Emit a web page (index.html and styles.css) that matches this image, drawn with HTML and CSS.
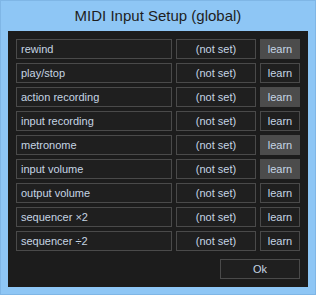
FILE: index.html
```html
<!DOCTYPE html>
<html lang="en">
<head>
    <meta charset="UTF-8">
    <title>MIDI Input Setup (global)</title>
    <link rel="stylesheet" href="styles.css">
</head>
<body>
    <div class="window">
        <div class="title">MIDI Input Setup (global)</div>
        <div class="panel">
            <div class="rows">
                <div class="name">rewind</div>
                <div class="value">(not set)</div>
                <button class="learn on">learn</button>

                <div class="name">play/stop</div>
                <div class="value">(not set)</div>
                <button class="learn">learn</button>

                <div class="name">action recording</div>
                <div class="value">(not set)</div>
                <button class="learn on">learn</button>

                <div class="name">input recording</div>
                <div class="value">(not set)</div>
                <button class="learn">learn</button>

                <div class="name">metronome</div>
                <div class="value">(not set)</div>
                <button class="learn on">learn</button>

                <div class="name">input volume</div>
                <div class="value">(not set)</div>
                <button class="learn on">learn</button>

                <div class="name">output volume</div>
                <div class="value">(not set)</div>
                <button class="learn">learn</button>

                <div class="name">sequencer &times;2</div>
                <div class="value">(not set)</div>
                <button class="learn">learn</button>

                <div class="name">sequencer &divide;2</div>
                <div class="value">(not set)</div>
                <button class="learn">learn</button>
            </div>
            <div class="footer">
                <button class="ok">Ok</button>
            </div>
        </div>
    </div>
</body>
</html>
```

FILE: styles.css
```css
body {
    margin: 0;
    background-color: #8ec6f5;
    font-family: 'Liberation Sans', Arial, sans-serif;
}

.window {
    width: 316px;
    height: 295px;
    box-sizing: border-box;
    border: 1px solid #7fb6e6;
}

.title {
    height: 30px;
    line-height: 30px;
    text-align: center;
    font-size: 15px;
    color: #1e1e1e;
}

.panel {
    margin: 0 7px;
    height: 256px;
    box-sizing: border-box;
    background-color: #1c1c1c;
    padding: 8px;
}

.rows {
    display: grid;
    grid-template-columns: 156px 80px 40px;
    grid-auto-rows: 20px;
    gap: 4px;
}

.name,
.value,
.learn,
.ok {
    box-sizing: border-box;
    border: 1px solid #4a4a4a;
    background-color: #1f1f1f;
    color: #c6d5e4;
    font-family: inherit;
    font-size: 11px;
    line-height: 18px;
    margin: 0;
    padding: 0;
}

.name {
    padding-left: 4px;
}

.value {
    text-align: center;
}

.learn.on {
    background-color: #4c4c4c;
    border-color: #4c4c4c;
}

.footer {
    display: flex;
    justify-content: flex-end;
    margin-top: 8px;
}

.ok {
    width: 80px;
    height: 20px;
}
```
